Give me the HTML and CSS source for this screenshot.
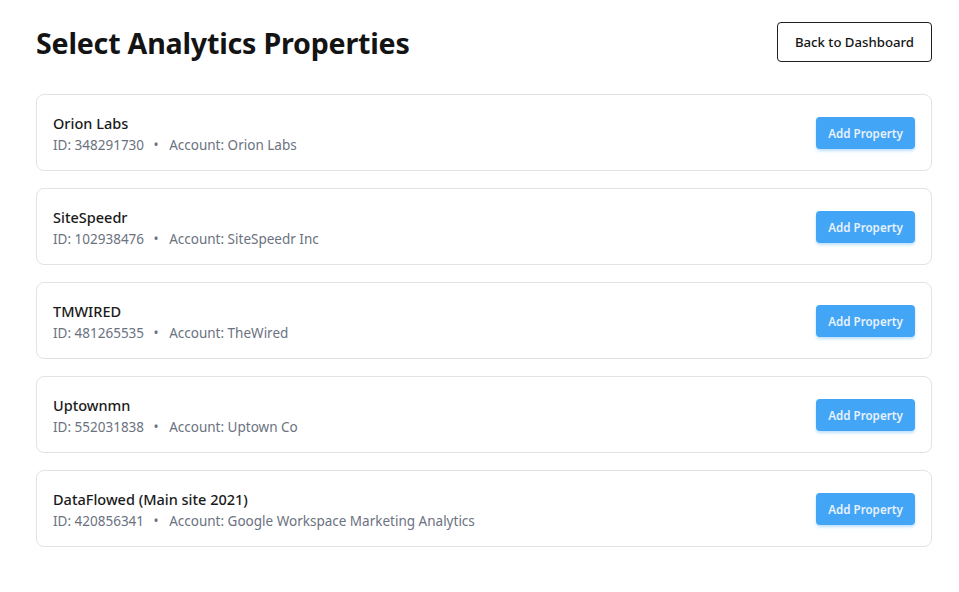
FILE: index.html
```html
<!DOCTYPE html>
<html lang="en">
<head>
<meta charset="utf-8">
<title>Select Analytics Properties</title>
<link rel="stylesheet" href="styles.css">
</head>
<body>
<div class="page">
  <header class="header">
    <h1 class="title">Select Analytics Properties</h1>
    <button class="back-btn">Back to Dashboard</button>
  </header>
  <div class="list">
    <div class="card">
      <div class="info">
        <div class="name">Orion Labs</div>
        <div class="meta">ID: 348291730 <span class="dot">•</span> Account: Orion Labs</div>
      </div>
      <button class="add-btn">Add Property</button>
    </div>
    <div class="card">
      <div class="info">
        <div class="name">SiteSpeedr</div>
        <div class="meta">ID: 102938476 <span class="dot">•</span> Account: SiteSpeedr Inc</div>
      </div>
      <button class="add-btn">Add Property</button>
    </div>
    <div class="card">
      <div class="info">
        <div class="name">TMWIRED</div>
        <div class="meta">ID: 481265535 <span class="dot">•</span> Account: TheWired</div>
      </div>
      <button class="add-btn">Add Property</button>
    </div>
    <div class="card">
      <div class="info">
        <div class="name">Uptownmn</div>
        <div class="meta">ID: 552031838 <span class="dot">•</span> Account: Uptown Co</div>
      </div>
      <button class="add-btn">Add Property</button>
    </div>
    <div class="card">
      <div class="info">
        <div class="name">DataFlowed (Main site 2021)</div>
        <div class="meta">ID: 420856341 <span class="dot">•</span> Account: Google Workspace Marketing Analytics</div>
      </div>
      <button class="add-btn">Add Property</button>
    </div>
  </div>
</div>
</body>
</html>
```

FILE: styles.css
```css
* { box-sizing: border-box; }
html, body { margin: 0; padding: 0; background: #ffffff; }
body {
  font-family: "Noto Sans", "Open Sans", sans-serif;
  color: #1a1a1a;
}
.page {
  padding: 22px 27px 0 36px;
}
.header {
  display: flex;
  justify-content: space-between;
  align-items: center;
  height: 40px;
  margin-bottom: 32px;
}
.title {
  margin: 0;
  font-size: 28.6px;
  line-height: 42px;
  padding-top: 2px;
  font-weight: 700;
  color: #141414;
  letter-spacing: -0.2px;
}
.back-btn {
  font-family: inherit;
  height: 40px;
  padding: 0 17px;
  background: #ffffff;
  border: 1px solid #1f1f1f;
  border-radius: 4px;
  font-size: 13.2px;
  font-weight: 500;
  color: #141414;
}
.list {
  display: flex;
  flex-direction: column;
  gap: 17px;
}
.card {
  display: flex;
  justify-content: space-between;
  align-items: center;
  border: 1px solid #e3e3e3;
  border-radius: 8px;
  padding: 0 16px;
  height: 77px;
}
.info {
  display: flex;
  flex-direction: column;
  padding-top: 2px;
}
.name {
  font-size: 14.5px;
  font-weight: 500;
  line-height: 22px;
  color: #1a1a1a;
}
.meta {
  font-size: 13.5px;
  line-height: 22px;
  color: #6b7280;
}
.dot {
  margin: 0 7px 0 6px;
}
.add-btn {
  font-family: inherit;
  height: 32px;
  width: 99px;
  padding: 0;
  margin-top: 1px;
  background: #42a5f5;
  border: none;
  border-radius: 4px;
  color: #e8f2fd;
  font-size: 11.6px;
  font-weight: 600;
  box-shadow: 0 2px 3px rgba(66, 165, 245, 0.35);
}
```
